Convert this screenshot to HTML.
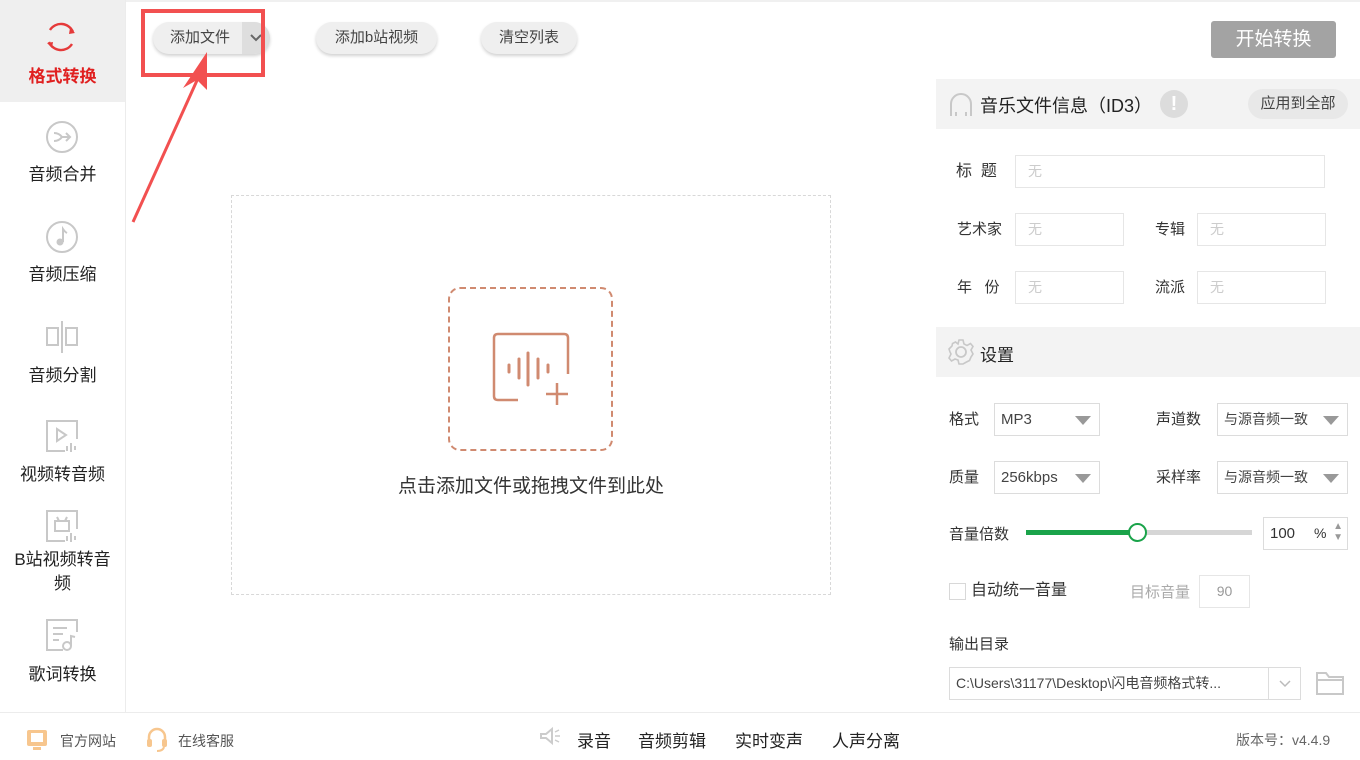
<!DOCTYPE html>
<html><head><meta charset="utf-8"><style>
*{margin:0;padding:0;box-sizing:border-box}
body{width:1360px;height:760px;position:relative;background:#fff;font-family:"Liberation Sans","Noto Sans CJK SC",sans-serif;color:#222;overflow:hidden}
.a{position:absolute}
.side{left:0;top:0;width:126px;height:712px;border-right:1px solid #ececec;background:#fff}
.nav{position:absolute;left:0;width:125px;text-align:center;font-size:17px;color:#222}
.btn{position:absolute;height:32px;border-radius:16px;background:#efefef;box-shadow:0 2px 3px rgba(0,0,0,.18);font-size:15px;color:#444;line-height:32px;text-align:center}
.lbl{position:absolute;font-size:15px;color:#333;line-height:18px}
.inp{position:absolute;border:1px solid #e6e6e6;height:33px;font-size:14px;color:#ccc;line-height:31px;padding-left:12px}
.sel{position:absolute;border:1px solid #dcdcdc;height:33px;font-size:15px;color:#444;line-height:31px;padding-left:6px}
.tri{position:absolute;right:8px;top:12px;width:0;height:0;border-left:8px solid transparent;border-right:8px solid transparent;border-top:9px solid #999}
</style></head><body>
<div class="a" style="left:0;top:0;width:1360px;height:2px;background:#f0f0f0"></div>
<div class="a side"></div>
<div class="a" style="left:0;top:0;width:125px;height:102px;background:#efefef"></div>
<svg class="a" style="top:20px;left:42px" width="38" height="36" viewBox="0 0 38 36"><path d="M8 10 A13 13 0 0 1 31 12" fill="none" stroke="#e53a3a" stroke-width="2.4"/><path d="M30 24 A13 13 0 0 1 7 22" fill="none" stroke="#e53a3a" stroke-width="2.4"/><path d="M28 8 L33 13 L27 14Z" fill="#e53a3a"/><path d="M10 28 L5 23 L11 22Z" fill="#e53a3a"/></svg>
<div class="nav" style="top:62px;color:#e02020;font-weight:bold">格式转换</div>
<svg class="a" style="left:45px;top:120px" width="34" height="34"><circle cx="17" cy="17" r="15" fill="none" stroke="#c8c8c8" stroke-width="2"/><path d="M9 13 Q14 13 17 17 Q14 21 9 21 M17 17 H25 M21 13 L25 17 L21 21" fill="none" stroke="#c8c8c8" stroke-width="2"/></svg>
<div class="nav" style="top:160px">音频合并</div>
<svg class="a" style="left:45px;top:220px" width="34" height="34"><circle cx="17" cy="17" r="15" fill="none" stroke="#c8c8c8" stroke-width="2"/><circle cx="15" cy="22" r="3.5" fill="#c8c8c8"/><path d="M18 22 V9 Q20 12 22 13" fill="none" stroke="#c8c8c8" stroke-width="2"/></svg>
<div class="nav" style="top:260px">音频压缩</div>
<svg class="a" style="left:45px;top:320px" width="34" height="34"><rect x="2" y="8" width="11" height="17" fill="none" stroke="#c8c8c8" stroke-width="2"/><rect x="21" y="8" width="11" height="17" fill="none" stroke="#c8c8c8" stroke-width="2"/><path d="M17 1 V33" stroke="#c8c8c8" stroke-width="2"/></svg>
<div class="nav" style="top:361px">音频分割</div>
<svg class="a" style="left:45px;top:419px" width="34" height="34"><path d="M20 32 H2 V2 H32 V20" fill="none" stroke="#c8c8c8" stroke-width="2"/><path d="M12 10 L21 16 L12 22Z" fill="none" stroke="#c8c8c8" stroke-width="2"/><path d="M22 27 V32 M26 24 V33 M30 27 V31" stroke="#c8c8c8" stroke-width="2"/></svg>
<div class="nav" style="top:460px">视频转音频</div>
<svg class="a" style="left:45px;top:509px" width="34" height="34"><path d="M20 32 H2 V2 H32 V20" fill="none" stroke="#c8c8c8" stroke-width="2"/><rect x="10" y="12" width="14" height="10" fill="none" stroke="#c8c8c8" stroke-width="2"/><path d="M12 8 L14 12 M22 8 L20 12" stroke="#c8c8c8" stroke-width="2"/><path d="M22 27 V32 M26 24 V33 M30 27 V31" stroke="#c8c8c8" stroke-width="2"/></svg>
<div class="nav" style="top:548px;line-height:24px">B站视频转音<br>频</div>
<svg class="a" style="left:45px;top:618px" width="34" height="34"><path d="M18 32 H2 V2 H32 V14" fill="none" stroke="#c8c8c8" stroke-width="2"/><path d="M8 10 H22 M8 16 H18 M8 22 H14" stroke="#c8c8c8" stroke-width="2"/><circle cx="22" cy="28" r="4" fill="none" stroke="#c8c8c8" stroke-width="2"/><path d="M26 28 V18 L30 19" fill="none" stroke="#c8c8c8" stroke-width="2"/></svg>
<div class="nav" style="top:660px">歌词转换</div>

<div class="btn" style="left:153px;top:22px;width:117px;text-align:left;padding-left:17px;overflow:hidden">添加文件<span style="position:absolute;right:0;top:0;width:28px;height:32px;background:#dedede"><svg width="28" height="32"><path d="M9 13 L14 18 L19 13" fill="none" stroke="#666" stroke-width="2"/></svg></span></div>
<div class="btn" style="left:316px;top:22px;width:121px">添加b站视频</div>
<div class="btn" style="left:481px;top:22px;width:96px">清空列表</div>
<div class="a" style="left:141px;top:9px;width:124px;height:68px;border:4px solid #f25050"></div>
<svg class="a" style="left:125px;top:40px" width="100" height="190"><path d="M8 182 L74 36" stroke="#f25050" stroke-width="3"/><path d="M82 12 L82 50 L72 40 L58 48Z" fill="#f25050"/></svg>

<div class="a" style="left:231px;top:195px;width:600px;height:400px;border:1.5px dashed #d8d8d8"></div>
<div class="a" style="left:448px;top:287px;width:165px;height:164px;border:2.5px dashed #d08a70;border-radius:12px"></div>
<svg class="a" style="left:490px;top:330px" width="85" height="80"><path d="M28 70 H8 Q4 70 4 66 V8 Q4 4 8 4 H74 Q78 4 78 8 V44" fill="none" stroke="#d08a70" stroke-width="2.5"/><path d="M19 35 V42 M29 29 V48 M38 23 V55 M48 29 V48 M58 35 V42" stroke="#d08a70" stroke-width="3" stroke-linecap="round"/><path d="M56 64 H78 M67 53 V75" stroke="#d08a70" stroke-width="2.5"/></svg>
<div class="a" style="left:231px;width:600px;top:471px;text-align:center;font-size:19px;color:#333">点击添加文件或拖拽文件到此处</div>

<div class="a" style="left:1211px;top:21px;width:125px;height:37px;background:#a3a3a3;border-radius:3px;color:#fff;font-size:19px;text-align:center;line-height:37px">开始转换</div>

<div class="a" style="left:936px;top:79px;width:424px;height:50px;background:#f3f3f3"></div>
<svg class="a" style="left:948px;top:90px" width="26" height="28"><path d="M3 26 V14 A10 10 0 0 1 23 14 V26" fill="none" stroke="#c8c8c8" stroke-width="2"/><path d="M8 22 V26 M18 22 V26" stroke="#c8c8c8" stroke-width="2"/></svg>
<div class="a" style="left:980px;top:92px;font-size:18px;color:#222">音乐文件信息（ID3）</div>
<div class="a" style="left:1160px;top:90px;width:28px;height:28px;border-radius:50%;background:#dcdcdc;color:#fff;font-weight:bold;text-align:center;line-height:28px;font-size:20px">!</div>
<div class="a" style="left:1248px;top:89px;width:100px;height:30px;border-radius:15px;background:#e8e8e8;font-size:15px;color:#444;text-align:center;line-height:30px">应用到全部</div>

<div class="lbl" style="left:956px;top:163px;font-size:16px">标&nbsp; 题</div>
<div class="inp" style="left:1015px;top:155px;width:310px">无</div>
<div class="lbl" style="left:957px;top:221px">艺术家</div>
<div class="inp" style="left:1015px;top:213px;width:109px">无</div>
<div class="lbl" style="left:1155px;top:221px">专辑</div>
<div class="inp" style="left:1197px;top:213px;width:129px">无</div>
<div class="lbl" style="left:957px;top:279px">年&nbsp;&nbsp; 份</div>
<div class="inp" style="left:1015px;top:271px;width:109px">无</div>
<div class="lbl" style="left:1155px;top:279px">流派</div>
<div class="inp" style="left:1197px;top:271px;width:129px">无</div>

<div class="a" style="left:936px;top:327px;width:424px;height:50px;background:#f3f3f3"></div>
<svg class="a" style="left:948px;top:339px" width="26" height="26" viewBox="0 0 26 26"><path d="M11 1 H15 L16 5 L19 6.5 L22.5 4.5 L25 7.5 L23 11 L24 13 L25 15 L23 18 L21.5 21.5 L18.5 23 L15 25 H11 L10 21 L7 20 L3.5 22 L1 19 L3 15 L2 13 L1 10 L4 7 L4.5 4.5 L7.5 3 L10 5Z" fill="none" stroke="#c8c8c8" stroke-width="1.6"/><circle cx="13" cy="13" r="5" fill="none" stroke="#c8c8c8" stroke-width="1.8"/></svg>
<div class="a" style="left:980px;top:341px;font-size:17px">设置</div>

<div class="lbl" style="left:949px;top:411px">格式</div>
<div class="sel" style="left:994px;top:403px;width:106px">MP3<span class="tri"></span></div>
<div class="lbl" style="left:1156px;top:411px">声道数</div>
<div class="sel" style="left:1217px;top:403px;width:131px;font-size:14px">与源音频一致<span class="tri"></span></div>
<div class="lbl" style="left:949px;top:469px">质量</div>
<div class="sel" style="left:994px;top:461px;width:106px">256kbps<span class="tri"></span></div>
<div class="lbl" style="left:1156px;top:469px">采样率</div>
<div class="sel" style="left:1217px;top:461px;width:131px;font-size:14px">与源音频一致<span class="tri"></span></div>

<div class="lbl" style="left:949px;top:526px">音量倍数</div>
<div class="a" style="left:1026px;top:530px;width:226px;height:5px;background:#d6d6d6"></div>
<div class="a" style="left:1026px;top:530px;width:112px;height:5px;background:#1aa34a"></div>
<div class="a" style="left:1128px;top:523px;width:19px;height:19px;border-radius:50%;background:#fff;border:2.5px solid #1aa34a"></div>
<div class="sel" style="left:1263px;top:517px;width:85px;color:#333">100 <span style="position:absolute;left:50px;font-size:14px">%</span><span style="position:absolute;right:4px;top:3px;font-size:10px;line-height:11px;color:#999">▲<br>▼</span></div>

<div class="a" style="left:949px;top:583px;width:17px;height:17px;border:1px solid #d8d8d8"></div>
<div class="lbl" style="left:971px;top:582px;font-size:16px">自动统一音量</div>
<div class="lbl" style="left:1130px;top:584px;color:#aaa">目标音量</div>
<div class="inp" style="left:1199px;top:575px;width:51px;color:#999;text-align:center;padding:0">90</div>

<div class="lbl" style="left:949px;top:636px">输出目录</div>
<div class="sel" style="left:949px;top:667px;width:352px;font-size:14px;color:#444">C:\Users\31177\Desktop\闪电音频格式转...<span style="position:absolute;right:0;top:0;width:32px;height:31px;border-left:1px solid #ddd"><svg width="32" height="31"><path d="M11 13 L16 18 L21 13" fill="none" stroke="#bbb" stroke-width="1.5"/></svg></span></div>
<svg class="a" style="left:1315px;top:670px" width="30" height="26"><path d="M2 24 V3 H11 L14 7 H28 V24Z M2 10 H28" fill="none" stroke="#c8c8c8" stroke-width="2"/></svg>

<div class="a" style="left:0;top:712px;width:1360px;height:1px;background:#ececec"></div>
<svg class="a" style="left:25px;top:728px" width="24" height="24"><rect x="2" y="2" width="20" height="16" rx="2" fill="#f7c68e"/><rect x="6" y="5" width="12" height="9" fill="#fff"/><rect x="8" y="19" width="8" height="3" fill="#f7c68e"/></svg>
<div class="a" style="left:60px;top:731px;font-size:14px;color:#555">官方网站</div>
<svg class="a" style="left:146px;top:727px" width="22" height="26"><path d="M3 14 V10 A8 8 0 0 1 19 10 V14" fill="none" stroke="#f7c68e" stroke-width="2.5"/><rect x="1" y="12" width="5" height="8" rx="2" fill="#f7c68e"/><rect x="16" y="12" width="5" height="8" rx="2" fill="#f7c68e"/><path d="M18 20 Q17 24 11 24" fill="none" stroke="#f7c68e" stroke-width="2"/></svg>
<div class="a" style="left:178px;top:731px;font-size:14px;color:#555">在线客服</div>
<svg class="a" style="left:538px;top:726px" width="24" height="20"><path d="M3 8 H8 L14 3 V17 L8 12 H3Z" fill="none" stroke="#ccc" stroke-width="2"/><path d="M17 6 L21 4 M17 10 H22 M17 14 L21 16" stroke="#ccc" stroke-width="1.5"/></svg>
<div class="a" style="left:577px;top:727px;font-size:17px;color:#222">录音</div>
<div class="a" style="left:638px;top:727px;font-size:17px;color:#222">音频剪辑</div>
<div class="a" style="left:735px;top:727px;font-size:17px;color:#222">实时变声</div>
<div class="a" style="left:832px;top:727px;font-size:17px;color:#222">人声分离</div>
<div class="a" style="left:1236px;top:730px;font-size:14px;color:#666">版本号：v4.4.9</div>
</body></html>
